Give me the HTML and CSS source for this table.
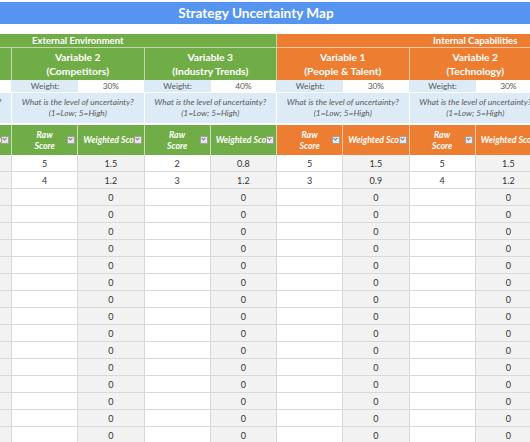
FILE: index.html
```html
<!DOCTYPE html>
<html>
<head>
<meta charset="utf-8">
<link rel="stylesheet" href="styles.css">
</head>
<body>
<div class="title"><span>Strategy Uncertainty Map</span></div>
<div class="viewport">
<div class="sheet">
  <div class="sec ext">External Environment</div>
  <div class="sec int">Internal Capabilities</div>

  <div class="var g">Variable 1<br>(Customers)</div>
  <div class="var g">Variable 2<br>(Competitors)</div>
  <div class="var g">Variable 3<br>(Industry Trends)</div>
  <div class="var o">Variable 1<br>(People &amp; Talent)</div>
  <div class="var o">Variable 2<br>(Technology)</div>
  <div class="var o">Variable 3<br>(Processes)</div>

  <div class="wl">Weight:</div><div class="wv">30%</div>
  <div class="wl">Weight:</div><div class="wv">30%</div>
  <div class="wl">Weight:</div><div class="wv">40%</div>
  <div class="wl">Weight:</div><div class="wv">30%</div>
  <div class="wl">Weight:</div><div class="wv">30%</div>
  <div class="wl">Weight:</div><div class="wv">40%</div>

  <div class="q">What is the level of uncertainty?<br>(1=Low; 5=High)</div>
  <div class="q">What is the level of uncertainty?<br>(1=Low; 5=High)</div>
  <div class="q">What is the level of uncertainty?<br>(1=Low; 5=High)</div>
  <div class="q">What is the level of uncertainty?<br>(1=Low; 5=High)</div>
  <div class="q">What is the level of uncertainty?<br>(1=Low; 5=High)</div>
  <div class="q">What is the level of uncertainty?<br>(1=Low; 5=High)</div>

  <div class="h g raw"><span>Raw<br>Score</span><i class="dd"></i></div><div class="h g wt"><span>Weighted Score</span><i class="dd"></i></div>
  <div class="h g raw"><span>Raw<br>Score</span><i class="dd"></i></div><div class="h g wt"><span>Weighted Score</span><i class="dd"></i></div>
  <div class="h g raw"><span>Raw<br>Score</span><i class="dd"></i></div><div class="h g wt"><span>Weighted Score</span><i class="dd"></i></div>
  <div class="h o raw"><span>Raw<br>Score</span><i class="dd"></i></div><div class="h o wt"><span>Weighted Score</span><i class="dd"></i></div>
  <div class="h o raw"><span>Raw<br>Score</span><i class="dd"></i></div><div class="h o wt"><span>Weighted Score</span><i class="dd"></i></div>
  <div class="h o raw"><span>Raw<br>Score</span><i class="dd"></i></div><div class="h o wt"><span>Weighted Score</span><i class="dd"></i></div>

  <div class="r">3</div><div class="w">0.9</div><div class="r">5</div><div class="w">1.5</div><div class="r">2</div><div class="w">0.8</div><div class="r">5</div><div class="w">1.5</div><div class="r">5</div><div class="w">1.5</div><div class="r">2</div><div class="w">0.8</div>
  <div class="r">2</div><div class="w">0.6</div><div class="r">4</div><div class="w">1.2</div><div class="r">3</div><div class="w">1.2</div><div class="r">3</div><div class="w">0.9</div><div class="r">4</div><div class="w">1.2</div><div class="r">3</div><div class="w">1.2</div>
  <div class="r"></div><div class="w">0</div><div class="r"></div><div class="w">0</div><div class="r"></div><div class="w">0</div><div class="r"></div><div class="w">0</div><div class="r"></div><div class="w">0</div><div class="r"></div><div class="w">0</div>
  <div class="r"></div><div class="w">0</div><div class="r"></div><div class="w">0</div><div class="r"></div><div class="w">0</div><div class="r"></div><div class="w">0</div><div class="r"></div><div class="w">0</div><div class="r"></div><div class="w">0</div>
  <div class="r"></div><div class="w">0</div><div class="r"></div><div class="w">0</div><div class="r"></div><div class="w">0</div><div class="r"></div><div class="w">0</div><div class="r"></div><div class="w">0</div><div class="r"></div><div class="w">0</div>
  <div class="r"></div><div class="w">0</div><div class="r"></div><div class="w">0</div><div class="r"></div><div class="w">0</div><div class="r"></div><div class="w">0</div><div class="r"></div><div class="w">0</div><div class="r"></div><div class="w">0</div>
  <div class="r"></div><div class="w">0</div><div class="r"></div><div class="w">0</div><div class="r"></div><div class="w">0</div><div class="r"></div><div class="w">0</div><div class="r"></div><div class="w">0</div><div class="r"></div><div class="w">0</div>
  <div class="r"></div><div class="w">0</div><div class="r"></div><div class="w">0</div><div class="r"></div><div class="w">0</div><div class="r"></div><div class="w">0</div><div class="r"></div><div class="w">0</div><div class="r"></div><div class="w">0</div>
  <div class="r"></div><div class="w">0</div><div class="r"></div><div class="w">0</div><div class="r"></div><div class="w">0</div><div class="r"></div><div class="w">0</div><div class="r"></div><div class="w">0</div><div class="r"></div><div class="w">0</div>
  <div class="r"></div><div class="w">0</div><div class="r"></div><div class="w">0</div><div class="r"></div><div class="w">0</div><div class="r"></div><div class="w">0</div><div class="r"></div><div class="w">0</div><div class="r"></div><div class="w">0</div>
  <div class="r"></div><div class="w">0</div><div class="r"></div><div class="w">0</div><div class="r"></div><div class="w">0</div><div class="r"></div><div class="w">0</div><div class="r"></div><div class="w">0</div><div class="r"></div><div class="w">0</div>
  <div class="r"></div><div class="w">0</div><div class="r"></div><div class="w">0</div><div class="r"></div><div class="w">0</div><div class="r"></div><div class="w">0</div><div class="r"></div><div class="w">0</div><div class="r"></div><div class="w">0</div>
  <div class="r"></div><div class="w">0</div><div class="r"></div><div class="w">0</div><div class="r"></div><div class="w">0</div><div class="r"></div><div class="w">0</div><div class="r"></div><div class="w">0</div><div class="r"></div><div class="w">0</div>
  <div class="r"></div><div class="w">0</div><div class="r"></div><div class="w">0</div><div class="r"></div><div class="w">0</div><div class="r"></div><div class="w">0</div><div class="r"></div><div class="w">0</div><div class="r"></div><div class="w">0</div>
  <div class="r"></div><div class="w">0</div><div class="r"></div><div class="w">0</div><div class="r"></div><div class="w">0</div><div class="r"></div><div class="w">0</div><div class="r"></div><div class="w">0</div><div class="r"></div><div class="w">0</div>
  <div class="r"></div><div class="w">0</div><div class="r"></div><div class="w">0</div><div class="r"></div><div class="w">0</div><div class="r"></div><div class="w">0</div><div class="r"></div><div class="w">0</div><div class="r"></div><div class="w">0</div>
  <div class="r"></div><div class="w">0</div><div class="r"></div><div class="w">0</div><div class="r"></div><div class="w">0</div><div class="r"></div><div class="w">0</div><div class="r"></div><div class="w">0</div><div class="r"></div><div class="w">0</div>
</div>
</div>
</body>
</html>
```

FILE: styles.css
```css
html, body {
  margin: 0;
  padding: 0;
  background: #ffffff;
  overflow: hidden;
}
body {
  width: 530px;
  height: 442px;
  font-family: Lato, "Liberation Sans", sans-serif;
  color: #404040;
}
.title {
  margin-top: 2px;
  height: 22px;
  background: #5595f0;
  color: #ffffff;
  display: flex;
  align-items: center;
  justify-content: center;
  padding-right: 18px;
  font-size: 13.6px;
  font-weight: 700;
}
.viewport {
  margin-top: 10px;
  width: 530px;
  overflow: hidden;
}
.sheet {
  display: grid;
  grid-template-columns: repeat(12, 66.25px);
  grid-template-rows: 14px 32px 13px 32px 30px repeat(17, 17px);
  margin-left: -120.5px;
  width: 795px;
}
.sheet > div {
  box-sizing: border-box;
  display: flex;
  align-items: center;
  justify-content: center;
  text-align: center;
  white-space: nowrap;
  overflow: hidden;
}
.sec {
  grid-column: span 6;
  color: #fff;
  font-weight: 700;
  font-size: 9.5px;
  border-right: 1px solid rgba(255,255,255,0.55);
  border-bottom: 1px solid rgba(255,255,255,0.55);
}
.ext { background: #70ad47; }
.int { background: #ed7d31; }
.var {
  grid-column: span 2;
  color: #fff;
  font-weight: 700;
  font-size: 10.3px;
  line-height: 14px;
  border-right: 1px solid rgba(255,255,255,0.55);
}
.g { background: #70ad47; }
.o { background: #ed7d31; }
.wl {
  background: #ddebf7;
  font-size: 8.4px;
  color: #595959;
  border-bottom: 1px solid #ffffff;
}
.wv {
  background: #ffffff;
  font-size: 8.4px;
  color: #595959;
  border-right: 1px solid #ddebf7;
  border-bottom: 1px solid #ffffff;
}
.q {
  grid-column: span 2;
  background: #ddebf7;
  font-style: italic;
  font-size: 8.4px;
  line-height: 11.5px;
  color: #595959;
  border-right: 1px solid #ffffff;
  border-bottom: 2px solid #ffffff;
}
.h {
  position: relative;
  color: #fff;
  font-weight: 700;
  font-style: italic;
  font-size: 8.8px;
  line-height: 11.5px;
  border-right: 1px solid rgba(255,255,255,0.6);
}
.h.wt {
  justify-content: flex-start;
  padding-left: 5px;
  padding-right: 10px;
}
.h.wt span {
  overflow: hidden;
}
.dd {
  position: absolute;
  right: 2px;
  top: 11px;
  width: 8px;
  height: 8px;
  box-sizing: border-box;
  background: #e6e6e6;
  border: 1px solid #a0a0a0;
}
.dd::after {
  content: "";
  position: absolute;
  left: 1px;
  top: 0px;
  width: 2px;
  height: 2px;
  border-right: 1px solid #7a7a7a;
  border-bottom: 1px solid #7a7a7a;
  transform: rotate(45deg);
}
.r, .w {
  font-size: 9px;
  color: #333333;
  border-right: 1px solid #d9d9d9;
  border-bottom: 1px solid #d9d9d9;
}
.r { background: #ffffff; }
.w { background: #f2f2f2; }
```
